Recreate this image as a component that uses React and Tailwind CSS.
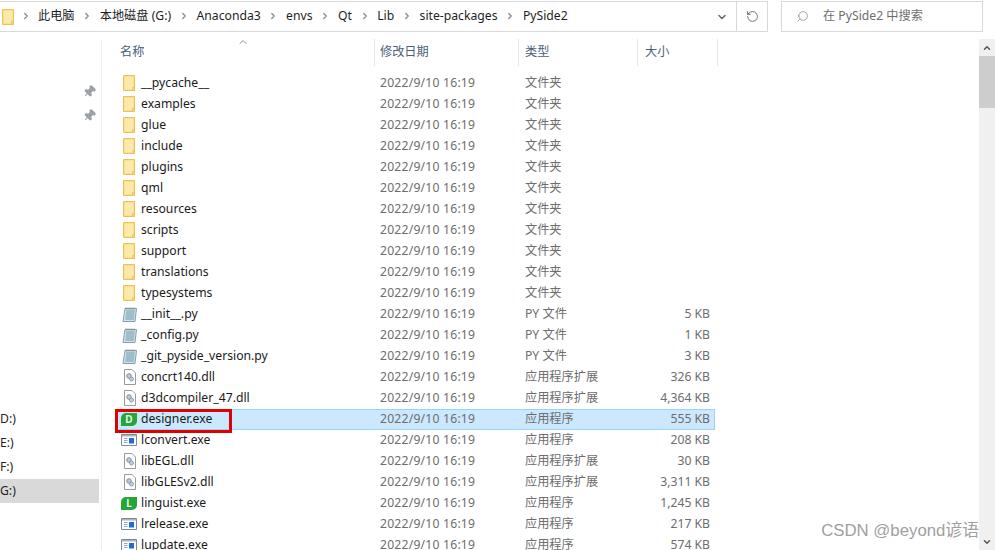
import React from 'react'
import { ChevronRight, ChevronDown, ChevronUp, RotateCw, Search, Pin } from 'lucide-react'

const FONT = 'font-["Noto_Sans","Noto_Sans_CJK_SC",sans-serif]'

const folders = ['__pycache__', 'examples', 'glue', 'include', 'plugins', 'qml', 'resources', 'scripts', 'support', 'translations', 'typesystems']

const files = [
  { name: '__init__.py', type: 'PY 文件', size: '5 KB', icon: 'py' },
  { name: '_config.py', type: 'PY 文件', size: '1 KB', icon: 'py' },
  { name: '_git_pyside_version.py', type: 'PY 文件', size: '3 KB', icon: 'py' },
  { name: 'concrt140.dll', type: '应用程序扩展', size: '326 KB', icon: 'dll' },
  { name: 'd3dcompiler_47.dll', type: '应用程序扩展', size: '4,364 KB', icon: 'dll' },
  { name: 'designer.exe', type: '应用程序', size: '555 KB', icon: 'designer', selected: true },
  { name: 'lconvert.exe', type: '应用程序', size: '208 KB', icon: 'exe' },
  { name: 'libEGL.dll', type: '应用程序扩展', size: '30 KB', icon: 'dll' },
  { name: 'libGLESv2.dll', type: '应用程序扩展', size: '3,311 KB', icon: 'dll' },
  { name: 'linguist.exe', type: '应用程序', size: '1,245 KB', icon: 'linguist' },
  { name: 'lrelease.exe', type: '应用程序', size: '217 KB', icon: 'exe' },
  { name: 'lupdate.exe', type: '应用程序', size: '574 KB', icon: 'exe' },
]

const crumbs = ['此电脑', '本地磁盘 (G:)', 'Anaconda3', 'envs', 'Qt', 'Lib', 'site-packages', 'PySide2']

function FolderIcon() {
  return (
    <svg width="12" height="16" viewBox="0 0 12 16" className="flex-none">
      <path d="M.5 .5h11v15H.5z" fill="#fde08a" stroke="#e8c35c" />
      <path d="M2 2h8v12H2z" fill="#fee9ad" />
      <path d="M9.500 12.500h2v3h-2z" fill="#fbd672" stroke="#e8c35c" strokeWidth=".8" />
    </svg>
  )
}

function PyIcon() {
  return (
    <svg width="15" height="15" viewBox="0 0 15 15" className="flex-none">
      <path d="M3 1.500h11.500l-1.500 13H1z" fill="#cfe3ea" stroke="#7f9fb0" />
      <path d="M4.200 4h8.500M4 6h8.500M3.800 8h8.500M3.600 10h8.500M3.400 12h8.500" stroke="#6f97ab" />
      <path d="M4 .5v2M6 .5v2M8 .5v2M10 .5v2M12 .5v2" stroke="#8a8a8a" />
    </svg>
  )
}

function DllIcon() {
  return (
    <svg width="12" height="16" viewBox="0 0 12 16" className="flex-none">
      <path d="M.5 .5h7.500l3.500 3.500v11.500H.5z" fill="#fff" stroke="#9a9a9a" />
      <circle cx="5" cy="7" r="2.300" fill="#c3c8cc" stroke="#8a8f94" />
      <circle cx="7.500" cy="10" r="2" fill="#bcd3e6" stroke="#8a9fb0" />
    </svg>
  )
}

function ExeIcon() {
  return (
    <svg width="16" height="12" viewBox="0 0 16 12" className="flex-none">
      <path d="M.5 .5h15v11H.5z" fill="#fff" stroke="#7f8a94" />
      <path d="M1 1h14v1.500H1z" fill="#a9b4bd" />
      <path d="M8 4h5v5.500H8z" fill="#1c6fd0" />
      <path d="M3 4h3.500v1H3zM3 6h3.500v1H3zM3 8h3.500v1H3z" fill="#8fa8c0" />
    </svg>
  )
}

function QtToolIcon({ letter }) {
  return (
    <span className="flex h-[13px] w-[16px] flex-none items-center justify-center rounded-tl-[5px] rounded-br-[5px] bg-[#26a638] text-[10px] font-semibold leading-none text-white">
      {letter}
    </span>
  )
}

function FileIcon({ kind }) {
  if (kind === 'py') return <span className="ml-[1px]"><PyIcon /></span>
  if (kind === 'dll') return <span className="ml-[3px]"><DllIcon /></span>
  if (kind === 'exe') return <ExeIcon />
  if (kind === 'designer') return <QtToolIcon letter="D" />
  return <QtToolIcon letter="L" />
}

function AddressBar() {
  return (
    <div className="flex h-[31px] items-stretch pr-[12px]">
      <div className="flex flex-1 items-center border-y border-r border-[#d9d9d9]">
        <span className="ml-[2px] flex"><FolderIcon /></span>
        <div className="ml-[7px] flex items-center text-[12.2px] text-[#1e1e1e]">
          {crumbs.map((c, i) => (
            <React.Fragment key={c}>
              <ChevronRight size={10} strokeWidth={3} className="text-[#8a8a8a]" />
              <span className={i === 0 ? 'ml-[7px] mr-[7.500px]' : 'mx-[7.700px]'}>{c}</span>
            </React.Fragment>
          ))}
        </div>
        <div className="ml-auto flex h-full items-center">
          <ChevronDown size={12} strokeWidth={3} className="mr-[8px] text-[#666]" />
          <div className="flex h-full w-[31px] items-center justify-center border-l border-[#d9d9d9]">
            <RotateCw size={13} strokeWidth={1.5} className="-scale-x-100 text-[#555]" />
          </div>
        </div>
      </div>
      <div className="ml-[13px] flex w-[202px] items-center border border-[#d9d9d9] pl-[14px] text-[12.2px] text-[#6d6d6d]">
        <Search size={13} strokeWidth={1.2} className="-scale-x-100 text-[#777]" />
        <span className="ml-[14px]">在 PySide2 中搜索</span>
      </div>
    </div>
  )
}

function Sidebar() {
  return (
    <aside className="flex w-[102px] flex-none flex-col border-r border-[#f0f0f0] pr-[2px] text-[12.2px] text-[#1e1e1e]">
      <div className="mt-[46px] flex flex-col items-end gap-[11px] pr-[3px] text-[#9aa0a5]">
        <Pin size={13} className="rotate-45" fill="#9aa0a5" />
        <Pin size={13} className="rotate-45" fill="#9aa0a5" />
      </div>
      <div className="mt-[285px] flex flex-col">
        <div className="flex h-[24px] items-center">D:)</div>
        <div className="flex h-[24px] items-center">E:)</div>
        <div className="flex h-[24px] items-center">F:)</div>
        <div className="flex h-[24px] items-center bg-[#d9d9d9]">G:)</div>
      </div>
    </aside>
  )
}

function HeaderCell({ width, label, className = '' }) {
  return (
    <div className={`relative flex h-[27px] flex-none items-center border-r border-[#e5e5e5] ${width} ${className}`}>
      {label}
    </div>
  )
}

function Row({ name, date = '2022/9/10 16:19', type, size, icon, selected }) {
  return (
    <div className={`relative flex h-[21px] w-[600px] flex-none items-center text-[12.2px] ${selected ? 'bg-[#cce8ff] outline outline-1 -outline-offset-1 outline-[#99d1ff]' : ''}`}>
      <div className="flex w-[265px] flex-none items-center pl-[6px]">
        <span className="flex w-[20px] flex-none justify-start">{icon}</span>
        <span className="text-[#1a1a1a]">{name}</span>
      </div>
      <span className="w-[145px] flex-none tracking-[0.2px] text-[#6d6d6d]">{date}</span>
      <span className="w-[113px] flex-none text-[#6d6d6d]">{type}</span>
      <span className="w-[72px] flex-none text-right text-[#6d6d6d]">{size}</span>
      {selected && <div className="absolute left-0 top-0 h-[24px] w-[117px] border-[3px] border-[#e00000]" />}
    </div>
  )
}

function Scrollbar() {
  return (
    <div className="flex h-full w-[16px] flex-none flex-col bg-[#f0f0f0]">
      <div className="flex h-[17px] items-center justify-center">
        <ChevronUp size={10} strokeWidth={3.5} className="text-[#555]" />
      </div>
      <div className="h-[52px] bg-[#cdcdcd]" />
      <div className="flex-1" />
      <div className="flex h-[17px] items-center justify-center">
        <ChevronDown size={10} strokeWidth={3.5} className="text-[#555]" />
      </div>
    </div>
  )
}

export default function App() {
  return (
    <div className={`relative flex h-[550px] w-[995px] flex-col overflow-hidden bg-white pt-[1px] ${FONT}`}>
      <AddressBar />
      <div className="flex min-h-0 flex-1 pt-[7px]">
        <Sidebar />
        <div className="flex min-w-0 flex-1 flex-col pl-[13px]">
          <div className="relative flex text-[12.2px] text-[#4c607a]">
            <HeaderCell width="w-[260px]" label="名称" className="pl-[5px]" />
            <HeaderCell width="w-[144px]" label="修改日期" className="pl-[5px]" />
            <HeaderCell width="w-[119px]" label="类型" className="pl-[6px]" />
            <HeaderCell width="w-[80px]" label="大小" className="pl-[7px]" />
            <ChevronUp size={12} strokeWidth={1.5} className="absolute left-[122px] top-[-3px] text-[#666]" />
          </div>
          <div className="mt-[7px] flex flex-col overflow-hidden">
            {folders.map((name) => (
              <Row key={name} name={name} type="文件夹" icon={<span className="ml-[2px] flex"><FolderIcon /></span>} />
            ))}
            {files.map((f) => (
              <Row key={f.name} name={f.name} type={f.type} size={f.size} selected={f.selected} icon={<FileIcon kind={f.icon} />} />
            ))}
          </div>
        </div>
        <Scrollbar />
      </div>
      <div className="absolute bottom-[9px] right-[16px] font-['Liberation_Sans','Noto_Sans_CJK_SC',sans-serif] text-[16.800px] leading-[20px] text-[#a0a0a0]">
        CSDN @beyond谚语
      </div>
    </div>
  )
}
